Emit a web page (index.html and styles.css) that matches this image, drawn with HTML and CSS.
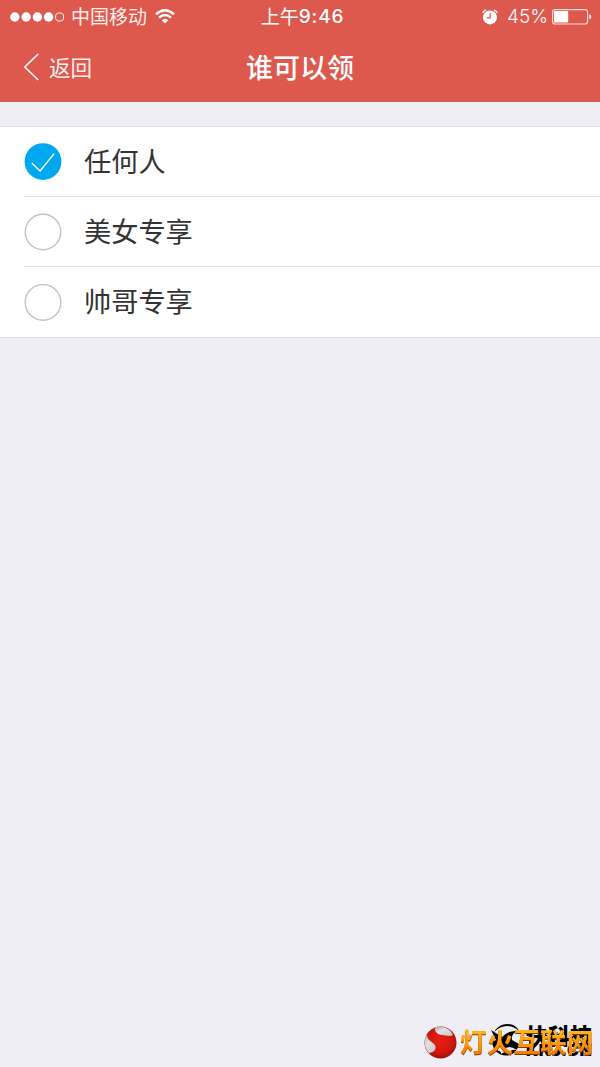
FILE: index.html
```html
<!DOCTYPE html>
<html lang="zh-CN">
<head>
  <meta charset="UTF-8">
  <meta name="viewport" content="width=device-width, initial-scale=1.0">
  <title>谁可以领</title>
  <link rel="stylesheet" href="styles.css">
</head>
<body>
  <header class="header">
    <div class="status-bar">
      <div class="status-left">
        <svg class="signal" width="54" height="10" viewBox="0 0 54 10">
          <g fill="#fff">
            <circle cx="4.8" cy="5" r="4.7"/>
            <circle cx="16.1" cy="5" r="4.7"/>
            <circle cx="27.4" cy="5" r="4.7"/>
            <circle cx="38.6" cy="5" r="4.7"/>
          </g>
          <circle cx="49.6" cy="5" r="4.1" fill="none" stroke="#fff" stroke-width="1"/>
        </svg>
        <span class="carrier">中国移动</span>
        <svg class="wifi" width="20" height="15" viewBox="0 0 20 15">
          <path d="M1 5.3Q10 -2.7 19 5.3" fill="none" stroke="#fff" stroke-width="2.5"/>
          <path d="M4 8.7Q10 3.4 16 8.7" fill="none" stroke="#fff" stroke-width="2.4"/>
          <path d="M6.6 11.2Q10 8.2 13.4 11.2L10 14.6Z" fill="#fff"/>
        </svg>
      </div>
      <div class="status-time"><span>上午</span><b>9:46</b></div>
      <div class="status-right">
        <svg class="alarm" width="16" height="16" viewBox="0 0 16 16">
          <circle cx="8" cy="8.4" r="7" fill="#fff"/>
          <path d="M.7 4Q1.6 1.6 4.2.9M15.3 4Q14.4 1.6 11.8.9" fill="none" stroke="#fff" stroke-width="1.3"/>
          <path d="M8.2 4.3V8.8H4.8" fill="none" stroke="#de594d" stroke-width="1.3"/>
        </svg>
        <span class="percent">45%</span>
        <svg class="battery" width="40" height="16" viewBox="0 0 40 16">
          <rect x=".6" y=".6" width="35" height="14.4" rx="2.6" fill="none" stroke="#f9dedb" stroke-width="1.1"/>
          <rect x="2" y="2" width="14.2" height="11.6" rx="1" fill="#fff"/>
          <path d="M37.2 5Q39.4 5.6 39.4 7.8T37.2 10.6Z" fill="#f9dedb"/>
        </svg>
      </div>
    </div>
    <nav class="nav-bar">
      <a class="back">
        <svg width="16" height="28" viewBox="0 0 16 28">
          <path d="M15.2 1L1.8 14L15.2 27" fill="none" stroke="#fff" stroke-width="1.5"/>
        </svg>
        <span>返回</span>
      </a>
      <h1 class="title">谁可以领</h1>
    </nav>
  </header>

  <ul class="options">
    <li class="option">
      <svg class="radio" width="38" height="38" viewBox="0 0 38 38">
        <circle cx="19" cy="18.6" r="18.4" fill="#00a8f0"/>
        <path d="M7.800 20L16 28L30.2 10.600" fill="none" stroke="#fff" stroke-width="1.5"/>
      </svg>
      <span class="label">任何人</span>
    </li>
    <li class="option">
      <svg class="radio" width="38" height="38" viewBox="0 0 38 38">
        <circle cx="19" cy="19" r="17.8" fill="#fff" stroke="#c2c2c7" stroke-width="1.4"/>
      </svg>
      <span class="label">美女专享</span>
    </li>
    <li class="option">
      <svg class="radio" width="38" height="38" viewBox="0 0 38 38">
        <circle cx="19" cy="19.4" r="17.8" fill="#fff" stroke="#c2c2c7" stroke-width="1.4"/>
      </svg>
      <span class="label">帅哥专享</span>
    </li>
  </ul>

  <div class="watermark">
    <div class="mark-back">
      <svg width="34" height="34" viewBox="0 0 34 34">
        <path d="M4 9Q9 1 17 1Q26 1 29 8Q24 3 17 3Q10 3 4 9Z" fill="#000"/>
        <path d="M1 7L12 14Q19 7 27 8Q21 11 22 17L29 21Q27 32 16 32.500Q4 32 2 19L6 17Z" fill="#000"/>
        <path d="M3 27Q12 21 14 27Q18 21 27 27Q18 26 22 31Q16 27 11 31Q12 27 3 27Z" fill="#efeef4"/>
      </svg>
      <div class="mark-names">
        <span class="mark-cn">快科技</span>
        <span class="mark-en">KKJ.CN</span>
      </div>
    </div>
    <div class="mark-front">
      <svg width="33" height="33" viewBox="0 0 33 33">
        <defs>
          <radialGradient id="ball" cx=".5" cy=".45" r=".62">
            <stop offset="0" stop-color="#e8200f"/>
            <stop offset=".6" stop-color="#d2180f"/>
            <stop offset="1" stop-color="#86100c"/>
          </radialGradient>
          <linearGradient id="silver" x1="0" y1="0" x2="1" y2="1">
            <stop offset="0" stop-color="#aaa"/>
            <stop offset=".4" stop-color="#e2e2e2"/>
            <stop offset="1" stop-color="#c4c4c4"/>
          </linearGradient>
        </defs>
        <circle cx="16.5" cy="16.5" r="16" fill="url(#ball)"/>
        <path d="M11 1.500C18-1 26 2 29 9C25 11 22 9 18 9C14 9 10 6 11 1.500Z" fill="url(#silver)"/>
        <path d="M3 8C-1 14 0 21 5 27C10 27 14 22 10 18C7 15 3 14 3 8Z" fill="url(#silver)"/>
      </svg>
      <span class="mark-text">灯火互联网</span>
    </div>
  </div>
</body>
</html>
```

FILE: styles.css
```css
* {
  box-sizing: border-box;
}

body {
  margin: 0;
  height: 1067px;
  position: relative;
  overflow: hidden;
  background: #efeef4;
  font-family: "Inter", "Noto Sans CJK SC", sans-serif;
}

svg {
  display: block;
  flex: none;
}

/* Header */
.header {
  height: 102px;
  background: #de594d;
  color: #fff;
}

.status-bar {
  height: 33px;
  display: grid;
  grid-template-columns: 1fr auto 1fr;
  align-items: center;
  padding: 0 8px 0 10px;
  font-size: 19px;
  line-height: 33px;
}

.status-left,
.status-right {
  display: flex;
  align-items: center;
}

.status-right {
  justify-content: flex-end;
}

.carrier {
  margin: 0 8px 0 7px;
  padding-top: 2px;
  line-height: 31px;
  color: #fdeeec;
}

.status-time {
  display: flex;
  align-items: center;
  padding-left: 3px;
}

.status-time span {
  padding-top: 2px;
  line-height: 31px;
}

.status-time b {
  padding-top: 1px;
  line-height: 32px;
  font-weight: 500;
  letter-spacing: 0.8px;
}

.percent {
  margin: 0 4px 0 9px;
  font-weight: 300;
}

.nav-bar {
  height: 69px;
  display: grid;
  grid-template-columns: 1fr auto 1fr;
  align-items: center;
  padding: 0 24px 2px 23px;
}

.back {
  display: flex;
  align-items: center;
  gap: 10px;
  font-size: 21.6px;
  line-height: 30px;
  color: #fdeeec;
}

.back span {
  padding-top: 2px;
}

.title {
  margin: 0;
  padding: 4px 0 0 1px;
  font-size: 27px;
  font-weight: 500;
  line-height: 40px;
}

/* Option list */
.options {
  margin: 24px 0 0;
  padding: 0;
  list-style: none;
  height: 212px;
  background: #fff;
  border-top: 1px solid #e2e1e6;
  border-bottom: 1px solid #dddce1;
}

.option {
  height: 70px;
  margin-left: 24px;
  display: flex;
  align-items: center;
  gap: 22px;
}

.option:first-child {
  height: 69px;
}

.option + .option {
  border-top: 1px solid #e2e2e4;
}

.label {
  padding-top: 3px;
  font-size: 27.2px;
  font-weight: 400;
  line-height: 40px;
  color: #333;
}

/* Watermark over the page corner */
.watermark {
  position: absolute;
  right: 0;
  bottom: 0;
  width: 177px;
  height: 47px;
}

.mark-back {
  display: flex;
  align-items: flex-start;
  gap: 2px;
  padding: 3px 0 0 67px;
}

.mark-names {
  display: flex;
  flex-direction: column;
  padding-top: 3px;
}

.mark-cn {
  font-size: 22px;
  font-weight: 900;
  line-height: 20px;
  color: #000;
}

.mark-en {
  font-size: 16px;
  font-weight: 900;
  line-height: 9px;
  letter-spacing: 0.6px;
  color: #000;
}

.mark-front {
  position: absolute;
  left: 1px;
  top: 6px;
  display: flex;
  align-items: center;
  gap: 3px;
}

.mark-text {
  font-size: 26.7px;
  font-weight: 700;
  line-height: 33px;
  white-space: nowrap;
  color: transparent;
  background: linear-gradient(#ffb21a 20%, #ff980c 50%, #f87a00 85%);
  -webkit-background-clip: text;
  background-clip: text;
  filter: drop-shadow(0.5px 1px 0.5px #70400c);
}
```
